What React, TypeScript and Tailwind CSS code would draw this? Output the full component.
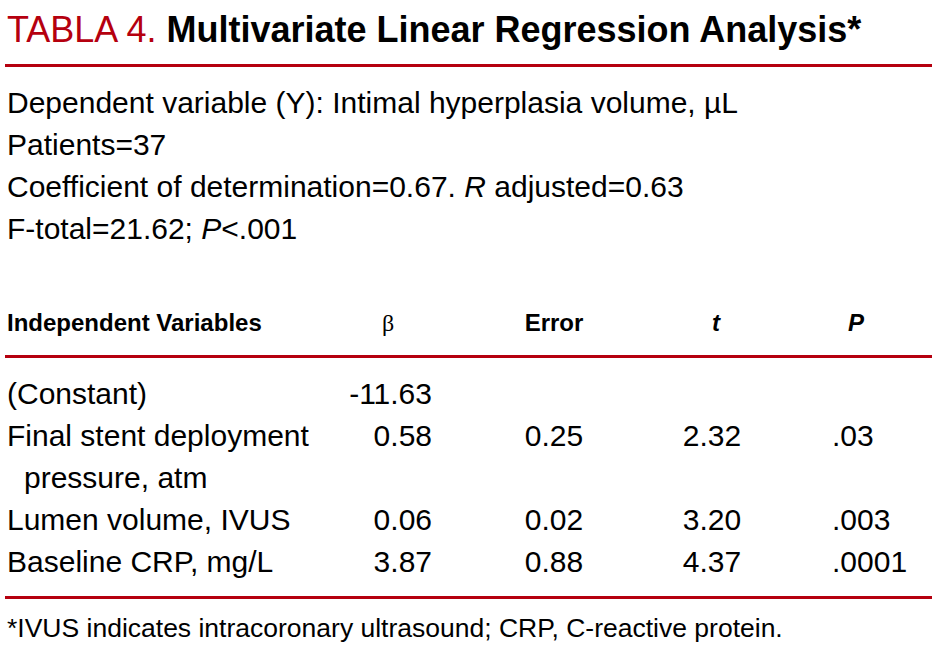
import React from "react";

const font = { fontFamily: '"Liberation Sans", Arial, sans-serif' };

export default function App() {
  const rows: [React.ReactNode, string, string, string, string][] = [
    ["(Constant)", "-11.63", "", "", ""],
    [
      <span key="f">
        Final stent deployment
        <br />
        <span className="pl-[17px]">pressure, atm</span>
      </span>,
      "0.58",
      "0.25",
      "2.32",
      ".03",
    ],
    ["Lumen volume, IVUS", "0.06", "0.02", "3.20", ".003"],
    ["Baseline CRP, mg/L", "3.87", "0.88", "4.37", ".0001"],
  ];
  return (
    <div className="w-[938px] h-[670px] bg-white text-black pl-[5px] pr-[6px] pt-[6px]" style={font}>
      <div className="text-[36px] leading-[48px] pl-[2px]">
        <span className="text-[#b5000f]">TABLA 4. </span>
        <span className="font-bold">Multivariate Linear Regression Analysis*</span>
      </div>
      <div className="h-[3px] bg-[#b5000f] mt-[10px]" />
      <div className="text-[30px] leading-[42px] pl-[2px] mt-[15px]">
        <div>Dependent variable (Y): Intimal hyperplasia volume, µL</div>
        <div>Patients=37</div>
        <div>
          Coefficient of determination=0.67. <i>R</i> adjusted=0.63
        </div>
        <div>
          F-total=21.62; <i>P</i>&lt;.001
        </div>
      </div>
      <div className="grid grid-cols-[335px_92px_244px_72px_1fr] text-[24px] leading-[34px] font-bold mt-[56px] items-center">
        <div className="pl-[2px]">Independent Variables</div>
        <div className="text-center pl-[4px] font-normal" style={{ fontFamily: '"Liberation Serif", serif' }}>β</div>
        <div className="text-center">Error</div>
        <div className="text-center italic pl-[8px]">t</div>
        <div className="pl-[100px] italic">P</div>
      </div>
      <div className="h-[3px] bg-[#b5000f] mt-[15px]" />
      <div className="grid grid-cols-[335px_92px_244px_72px_1fr] text-[30px] leading-[42px] mt-[15px]">
        {rows.map((r, i) => (
          <React.Fragment key={i}>
            <div className="pl-[2px]">{r[0]}</div>
            <div className="text-right">{r[1]}</div>
            <div className="text-center">{r[2]}</div>
            <div className="text-center">{r[3]}</div>
            <div className="pl-[84px]">{r[4]}</div>
          </React.Fragment>
        ))}
      </div>
      <div className="h-[3px] bg-[#b5000f] mt-[13px]" />
      <div className="text-[26.5px] leading-[36px] pl-[2px] mt-[11px]">
        *IVUS indicates intracoronary ultrasound; CRP, C-reactive protein.
      </div>
    </div>
  );
}
